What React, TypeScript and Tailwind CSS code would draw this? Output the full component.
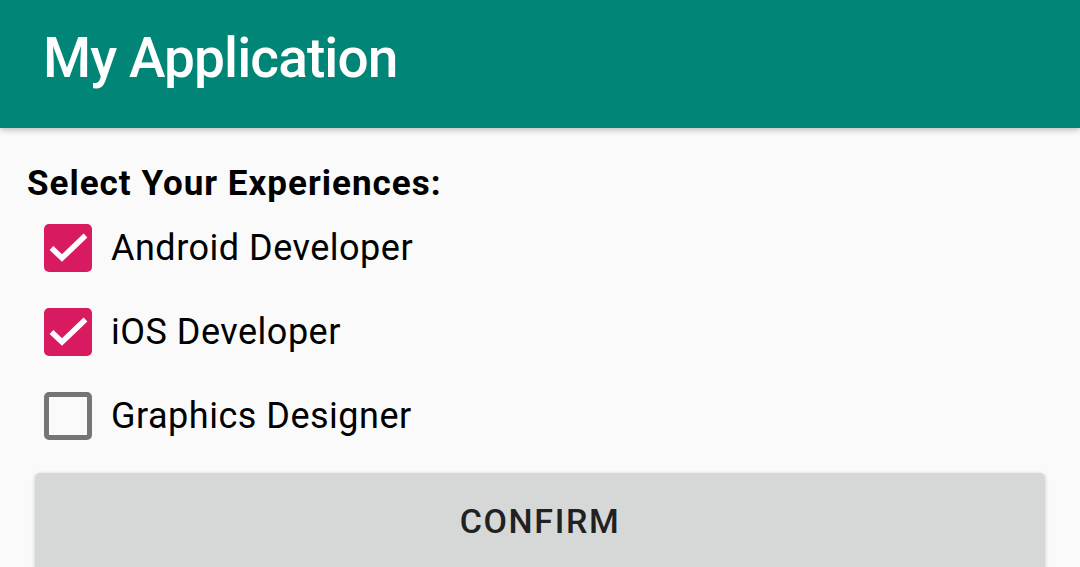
import type { ReactNode } from "react";

type Option = { label: string; checked: boolean };

const OPTIONS: Option[] = [
  { label: "Android Developer", checked: true },
  { label: "iOS Developer", checked: true },
  { label: "Graphics Designer", checked: false },
];

function CheckBox({ checked }: { checked: boolean }) {
  if (!checked) {
    return (
      <span className="block h-[48px] w-[48px] flex-none rounded-[5px] border-[5px] border-[#757575]" />
    );
  }
  return (
    <span className="flex h-[48px] w-[48px] flex-none items-center justify-center rounded-[5px] bg-[#D81B60]">
      <svg viewBox="0 0 48 48" className="h-[48px] w-[48px]">
        <path d="M7.5 24 L18 34 L41.5 11.5" fill="none" stroke="#fff" strokeWidth="5.5" />
      </svg>
    </span>
  );
}

function Row({ children }: { children: ReactNode }) {
  return <div className="flex h-[84px] items-center gap-[19px] pl-[44px]">{children}</div>;
}

export default function App() {
  return (
    <div className="flex h-[567px] w-[1080px] flex-col overflow-hidden bg-[#FAFAFA] font-['Roboto',sans-serif]">
      <header className="relative z-10 flex h-[128px] flex-none items-center bg-[#008577] pl-[43px] shadow-[0_2px_6px_rgba(0,0,0,0.25)]">
        <h1 className="pb-[12px] text-[55px] font-medium leading-none tracking-[-0.9px] text-white">My Application</h1>
      </header>

      <main className="flex flex-col">
        <h2 className="pl-[27px] pt-[36px] text-[35px] font-bold leading-[40px] tracking-[1px] text-black">
          Select Your Experiences:
        </h2>
        <div className="mt-[2px] flex flex-col">
          {OPTIONS.map((o) => (
            <Row key={o.label}>
              <CheckBox checked={o.checked} />
              <span className="text-[36px] leading-none tracking-[0.5px] text-black">{o.label}</span>
            </Row>
          ))}
        </div>
        <div className="pt-[15px] pl-[35px] pr-[35px]">
          <button className="flex h-[100px] w-full items-start justify-center rounded-[5px] bg-[#D6D7D7] pt-[31px] text-[34px] font-medium leading-none tracking-[1.6px] text-[#212121] shadow-[0_1px_4px_rgba(0,0,0,0.2)]">
            CONFIRM
          </button>
        </div>
      </main>
    </div>
  );
}
